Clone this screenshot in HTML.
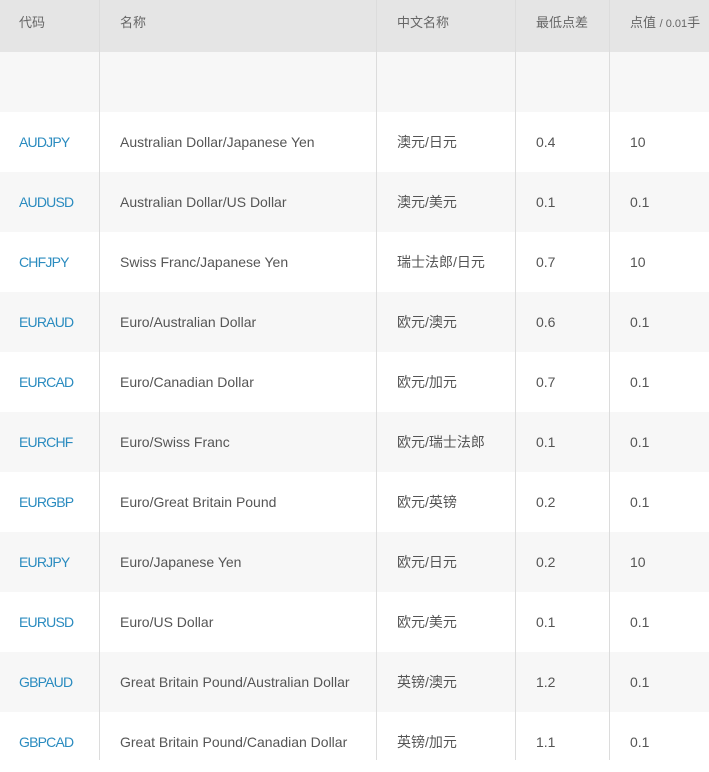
<!DOCTYPE html>
<html><head><meta charset="utf-8"><style>
body{margin:0;width:709px;height:760px;overflow:hidden;background:#fff;font-family:"Liberation Sans","Noto Sans CJK SC",sans-serif;color:#555;}
.row{position:absolute;left:0;width:709px;height:60px;}
.row span{position:absolute;top:0;line-height:60px;font-size:14px;white-space:nowrap;}
.c1{left:19px;color:#2a8bbf}.c2{left:120px}.c3{left:397px}.c4{left:536px}.c5{left:630px}
.row .c1{letter-spacing:-0.8px}
.hd{position:absolute;top:0;left:0;width:709px;height:52px;background:#e5e5e5}
.hd span{position:absolute;top:12px;font-size:13px;color:#666}
.vl{position:absolute;top:0;width:1px;height:760px;background:#dcdcdc}
</style></head><body>
<div class="hd"><span class="c1" style="color:#666">代码</span><span class="c2">名称</span><span class="c3">中文名称</span><span class="c4">最低点差</span><span class="c5">点值 <span style="position:static;font-size:11px">/ 0.01</span>手</span></div>
<div class="row" style="top:52px;background:#f7f7f7"></div>
<div class="row" style="top:112px"><span class="c1">AUDJPY</span><span class="c2">Australian Dollar/Japanese Yen</span><span class="c3">澳元/日元</span><span class="c4">0.4</span><span class="c5">10</span></div>
<div class="row" style="top:172px;background:#f7f7f7"><span class="c1">AUDUSD</span><span class="c2">Australian Dollar/US Dollar</span><span class="c3">澳元/美元</span><span class="c4">0.1</span><span class="c5">0.1</span></div>
<div class="row" style="top:232px"><span class="c1">CHFJPY</span><span class="c2">Swiss Franc/Japanese Yen</span><span class="c3">瑞士法郎/日元</span><span class="c4">0.7</span><span class="c5">10</span></div>
<div class="row" style="top:292px;background:#f7f7f7"><span class="c1">EURAUD</span><span class="c2">Euro/Australian Dollar</span><span class="c3">欧元/澳元</span><span class="c4">0.6</span><span class="c5">0.1</span></div>
<div class="row" style="top:352px"><span class="c1">EURCAD</span><span class="c2">Euro/Canadian Dollar</span><span class="c3">欧元/加元</span><span class="c4">0.7</span><span class="c5">0.1</span></div>
<div class="row" style="top:412px;background:#f7f7f7"><span class="c1">EURCHF</span><span class="c2">Euro/Swiss Franc</span><span class="c3">欧元/瑞士法郎</span><span class="c4">0.1</span><span class="c5">0.1</span></div>
<div class="row" style="top:472px"><span class="c1">EURGBP</span><span class="c2">Euro/Great Britain Pound</span><span class="c3">欧元/英镑</span><span class="c4">0.2</span><span class="c5">0.1</span></div>
<div class="row" style="top:532px;background:#f7f7f7"><span class="c1">EURJPY</span><span class="c2">Euro/Japanese Yen</span><span class="c3">欧元/日元</span><span class="c4">0.2</span><span class="c5">10</span></div>
<div class="row" style="top:592px"><span class="c1">EURUSD</span><span class="c2">Euro/US Dollar</span><span class="c3">欧元/美元</span><span class="c4">0.1</span><span class="c5">0.1</span></div>
<div class="row" style="top:652px;background:#f7f7f7"><span class="c1">GBPAUD</span><span class="c2">Great Britain Pound/Australian Dollar</span><span class="c3">英镑/澳元</span><span class="c4">1.2</span><span class="c5">0.1</span></div>
<div class="row" style="top:712px"><span class="c1">GBPCAD</span><span class="c2">Great Britain Pound/Canadian Dollar</span><span class="c3">英镑/加元</span><span class="c4">1.1</span><span class="c5">0.1</span></div>
<div class="vl" style="left:99px"></div><div class="vl" style="left:376px"></div><div class="vl" style="left:515px"></div><div class="vl" style="left:609px"></div>
</body></html>
